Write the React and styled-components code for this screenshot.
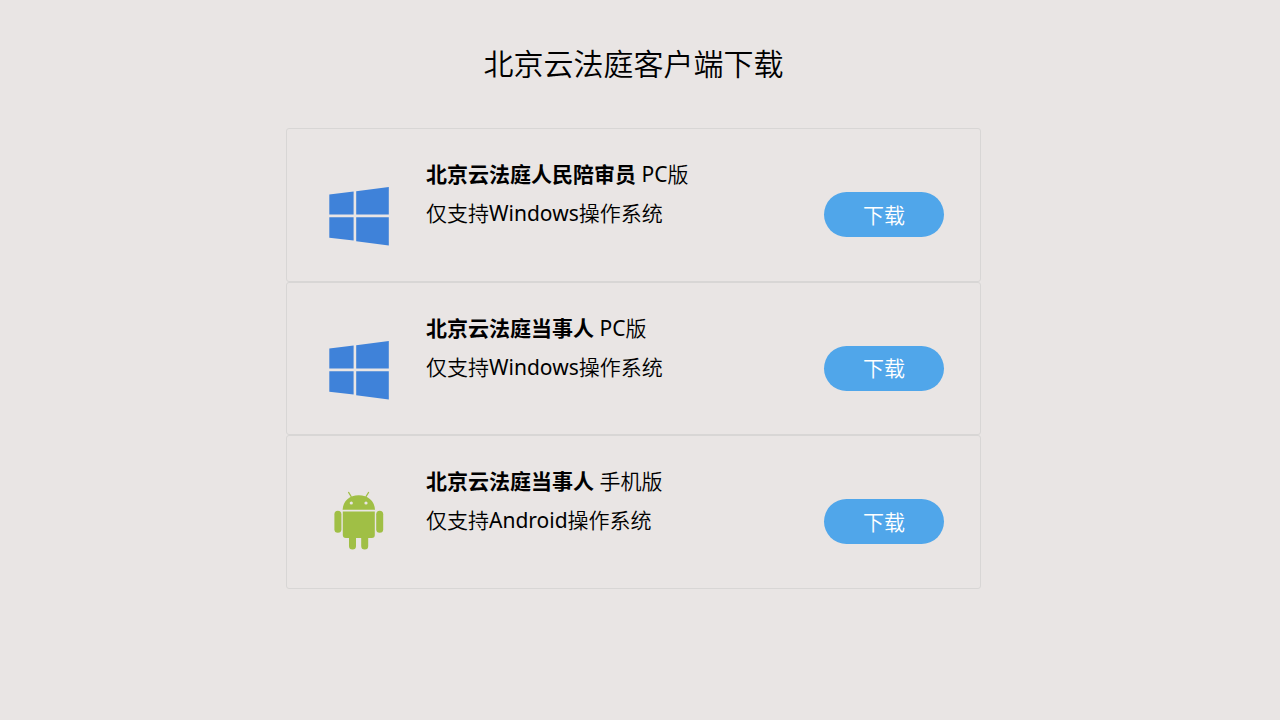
import React from 'react';
import styled, { createGlobalStyle } from 'styled-components';

const clients = [
  { id: 1, name: '北京云法庭人民陪审员', edition: 'PC版', desc: '仅支持Windows操作系统', icon: 'windows' },
  { id: 2, name: '北京云法庭当事人', edition: 'PC版', desc: '仅支持Windows操作系统', icon: 'windows' },
  { id: 3, name: '北京云法庭当事人', edition: '手机版', desc: '仅支持Android操作系统', icon: 'android' },
];

const WindowsIcon = () => (
  <Icon viewBox='0 0 60 62' fill='#3f82d9' aria-hidden='true'>
    <path d='M0.3 10.4 L24.6 7.6 V30.4 H0.3 Z' />
    <path d='M27.2 7.3 L59.8 3 V30.4 H27.2 Z' />
    <path d='M0.3 33.2 H24.6 V56.6 L0.3 53.8 Z' />
    <path d='M27.2 33.2 H59.8 V61.6 L27.2 57.2 Z' />
  </Icon>
);

const AndroidIcon = () => (
  <Icon viewBox='0 0 60 62' fill='#a0bf45' aria-hidden='true'>
    <path d='M19.6 1.4 L22.2 5.6 M39.6 1.4 L37 5.6' stroke='#a0bf45' strokeWidth='1.2' strokeLinecap='round' />
    <path d='M13.6 18.8 C14 10 20.5 4.2 29.7 4.2 S45.6 10 46 18.8 Z' />
    <circle cx='22.3' cy='12' r='1.6' fill='#e9e5e4' />
    <circle cx='37' cy='12' r='1.6' fill='#e9e5e4' />
    <rect x='5.4' y='19.8' width='7' height='22' rx='3.5' />
    <rect x='47.2' y='19.8' width='7' height='22' rx='3.5' />
    <path d='M13.8 20.4 H45.8 V44 Q45.8 47 42.8 47 H16.8 Q13.8 47 13.8 44 Z' />
    <path d='M20 45 H27 V55 A3.5 3.5 0 0 1 20 55 Z' />
    <path d='M32.2 45 H39.2 V55 A3.5 3.5 0 0 1 32.2 55 Z' />
  </Icon>
);

export default function App() {
  return (
    <Container>
      <GlobalStyle />
      <Title>北京云法庭客户端下载</Title>
      <ClientList>
        {clients.map((client) => (
          <ClientItem key={client.id}>
            {client.icon === 'windows' ? <WindowsIcon /> : <AndroidIcon />}
            <Info>
              <p>
                <strong>{client.name}</strong> {client.edition}
              </p>
              <p>{client.desc}</p>
            </Info>
            <DownloadButton type='button'>下载</DownloadButton>
          </ClientItem>
        ))}
      </ClientList>
    </Container>
  );
}

const GlobalStyle = createGlobalStyle`
  * {
    box-sizing: border-box;
  }
  body {
    margin: 0;
    background-color: #e9e5e4;
    color: #000000;
    font-family: 'Noto Sans', 'Noto Sans CJK SC DemiLight', 'Noto Sans CJK SC Light', 'Noto Sans CJK SC', sans-serif;
  }
`;

const Container = styled.main`
  display: flex;
  flex-direction: column;
  align-items: center;
  padding: 44px 13px 44px 0;
`;

const Title = styled.h1`
  margin: 0 0 44px;
  font-size: 30px;
  font-weight: 400;
  line-height: 40px;
`;

const ClientList = styled.ul`
  display: grid;
  grid-auto-rows: 1fr;
  width: 100%;
  max-width: 695px;
  min-height: 461px;
  margin: 0;
  padding: 0;
  list-style: none;
`;

const ClientItem = styled.li`
  display: flex;
  align-items: flex-start;
  padding: 26px 36px 26px 42px;
  border: 1px solid #d8d6d5;
  border-radius: 3px;
`;

const Icon = styled.svg`
  flex: none;
  width: 60px;
  height: 62px;
  margin-top: 29px;
`;

const Info = styled.div`
  flex: 1;
  margin-left: 37px;
  font-size: 21px;
  font-weight: 400;
  line-height: 39px;

  p {
    margin: 0;
  }
  strong {
    font-family: 'Noto Sans', 'Noto Sans CJK SC', sans-serif;
    font-weight: 700;
  }
`;

const DownloadButton = styled.button`
  flex: none;
  width: 120px;
  height: 45px;
  margin-top: 37px;
  padding: 0 0 2px;
  border: none;
  border-radius: 23px;
  background-color: #50a6ea;
  color: #ffffff;
  font-family: inherit;
  font-size: 21px;
  font-weight: 400;
  cursor: pointer;
`;
